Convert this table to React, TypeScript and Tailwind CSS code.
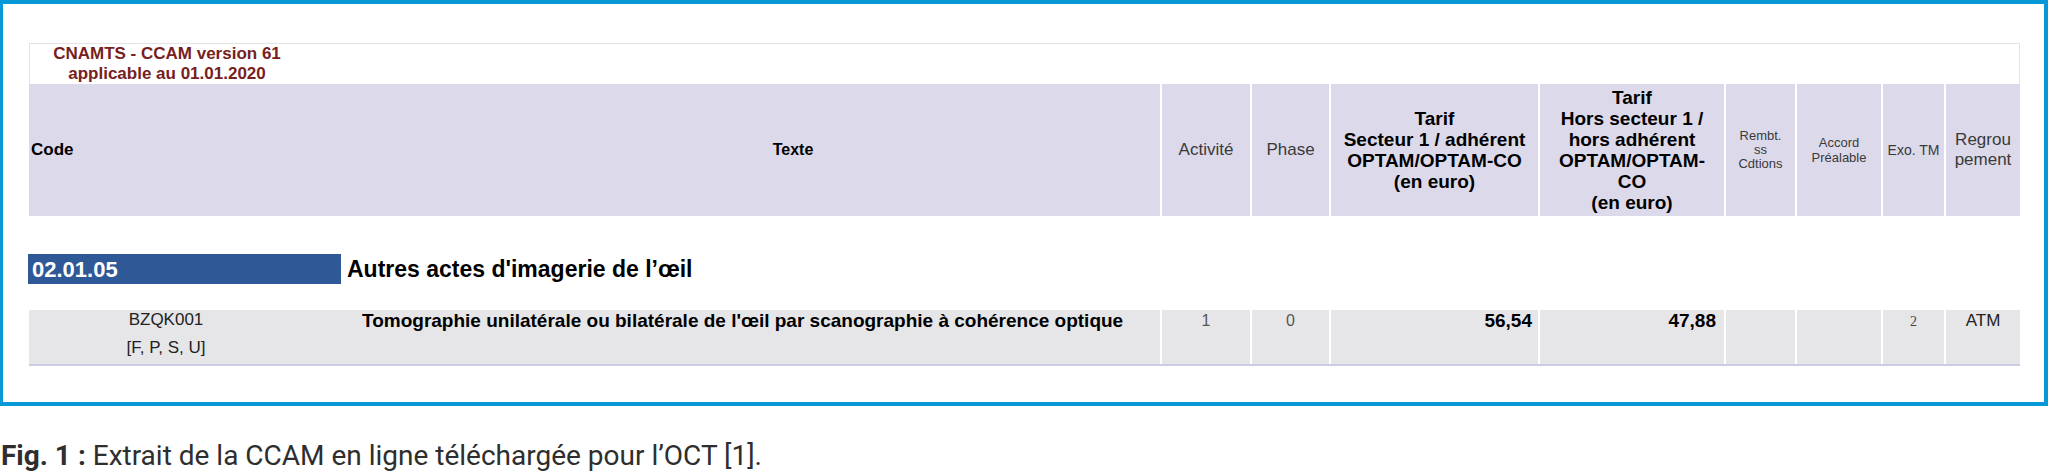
import React from "react";

const sep = "border-l-2 border-white";

export default function App() {
  return (
    <div className="w-[2048px] h-[474px] bg-white overflow-hidden font-['Liberation_Sans',Arial,sans-serif]">
      {/* Blue figure frame */}
      <div className="h-[406px] border-t-4 border-b-4 border-l-[3px] border-r-4 border-[#0898d7]">
        <div className="ml-[26px] w-[1991px]">
          {/* Title */}
          <div className="mt-[39px] h-[41px] border border-b-0 border-[#e3e3e3]">
            <div className="w-[274px] text-center text-[17px] leading-[20px] font-bold text-[#76211d]">
              CNAMTS - CCAM version 61
              <br />
              applicable au 01.01.2020
            </div>
          </div>

          {/* Header */}
          <div className="flex h-[132px] bg-[#dcd9ea] text-[#3a3a3a]">
            <div className="w-[397px] flex items-center pl-[2px] text-[17px] font-bold text-black">Code</div>
            <div className="w-[734px] flex items-center justify-center text-[16px] font-bold text-black">
              Texte
            </div>
            <div className={`w-[90px] ${sep} flex items-center justify-center text-[17px]`}>Activité</div>
            <div className={`w-[79px] ${sep} flex items-center justify-center text-[17px]`}>Phase</div>
            <div
              className={`w-[209px] ${sep} flex items-center justify-center text-center text-[19px] leading-[21px] font-bold text-black whitespace-nowrap`}
            >
              <div>
                Tarif
                <br />
                Secteur 1 / adhérent
                <br />
                OPTAM/OPTAM-CO
                <br />
                (en euro)
              </div>
            </div>
            <div
              className={`w-[186px] ${sep} flex items-center justify-center text-center text-[19px] leading-[21px] font-bold text-black whitespace-nowrap`}
            >
              <div>
                Tarif
                <br />
                Hors secteur 1 /
                <br />
                hors adhérent
                <br />
                OPTAM/OPTAM-
                <br />
                CO
                <br />
                (en euro)
              </div>
            </div>
            <div className={`w-[71px] ${sep} flex items-center justify-center text-center text-[13px] leading-[14px]`}>
              <div>
                Rembt.
                <br />
                ss
                <br />
                Cdtions
              </div>
            </div>
            <div className={`w-[86px] ${sep} flex items-center justify-center text-center text-[13px] leading-[15px]`}>
              <div>
                Accord
                <br />
                Préalable
              </div>
            </div>
            <div className={`w-[63px] ${sep} flex items-center justify-center text-[14px] whitespace-nowrap`}>
              Exo. TM
            </div>
            <div className={`w-[76px] ${sep} flex items-center justify-center text-center text-[17px] leading-[20px]`}>
              <div>
                Regrou
                <br />
                pement
              </div>
            </div>
          </div>

          {/* Section */}
          <div className="mt-[38px] flex items-center h-[30px]">
            <div className="w-[313px] h-full -ml-px bg-[#2f5896] flex items-center pl-[4px] text-white font-bold text-[22px]">
              02.01.05
            </div>
            <div className="ml-[6px] font-bold text-[23px] text-black">Autres actes d'imagerie de l’œil</div>
          </div>

          {/* Row */}
          <div className="mt-[26px] flex h-[56px] bg-[#e6e6e8] border-b-2 border-[#c9cce4] text-[#222]">
            <div className="w-[274px] text-center text-[17px] leading-[20px]">
              <div>BZQK001</div>
              <div className="mt-[8px]">[F, P, S, U]</div>
            </div>
            <div className="w-[857px] pl-[59px] pt-[1px] text-[19px] leading-[20px] font-bold text-black whitespace-nowrap">
              Tomographie unilatérale ou bilatérale de l'œil par scanographie à cohérence optique
            </div>
            <div className={`w-[90px] ${sep} pt-[1px] text-center text-[16px] leading-[20px] text-[#555]`}>1</div>
            <div className={`w-[79px] ${sep} pt-[1px] text-center text-[16px] leading-[20px] text-[#555]`}>0</div>
            <div className={`w-[209px] ${sep} pt-[1px] pr-[6px] text-right text-[19px] leading-[20px] font-bold text-black`}>
              56,54
            </div>
            <div className={`w-[186px] ${sep} pt-[1px] pr-[8px] text-right text-[19px] leading-[20px] font-bold text-black`}>
              47,88
            </div>
            <div className={`w-[71px] ${sep}`} />
            <div className={`w-[86px] ${sep}`} />
            <div className={`w-[63px] ${sep} pt-[2px] text-center text-[14px] leading-[20px] font-['Liberation_Serif',serif] text-[#444]`}>
              2
            </div>
            <div className={`w-[76px] ${sep} pt-[1px] text-center text-[17px] leading-[20px]`}>ATM</div>
          </div>
        </div>
      </div>

      {/* Caption */}
      <p className="mt-[34px] pl-[1px] text-[28px] leading-[32px] text-[#2e2e2e] font-['Roboto',sans-serif] whitespace-nowrap">
        <span className="font-bold">Fig. 1 :</span> Extrait de la CCAM en ligne téléchargée pour l’OCT [1].
      </p>
    </div>
  );
}
